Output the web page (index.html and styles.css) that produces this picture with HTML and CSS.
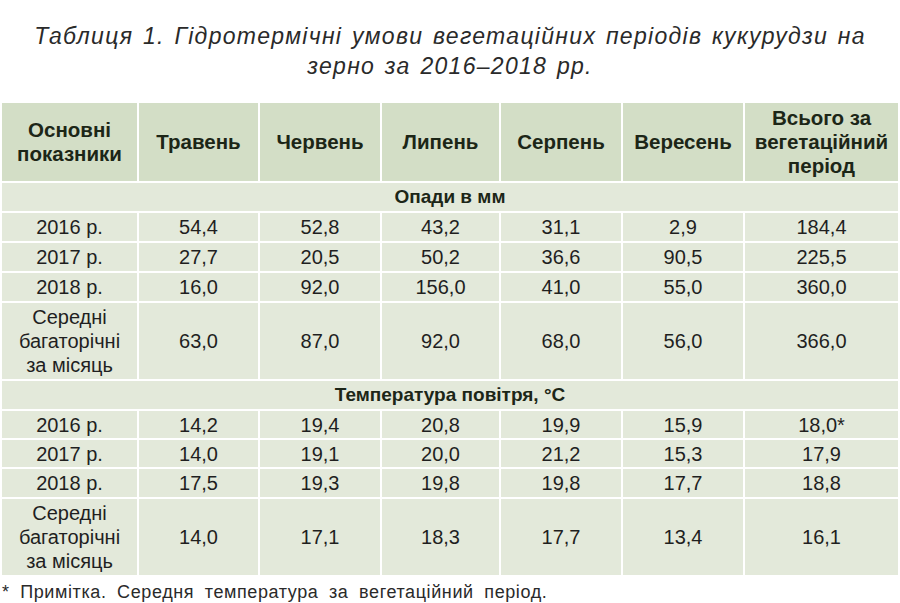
FILE: index.html
```html
<!DOCTYPE html>
<html lang="uk">
<head>
<meta charset="utf-8">
<title>Таблиця 1</title>
<link rel="stylesheet" href="styles.css">
</head>
<body>
<h1 class="title">Таблиця 1. Гідротермічні умови вегетаційних періодів кукурудзи на<br>зерно за 2016–2018 рр.</h1>
<table class="data">
  <colgroup>
    <col class="c1"><col class="c2"><col class="c3"><col class="c4"><col class="c5"><col class="c6"><col class="c7">
  </colgroup>
  <thead>
    <tr class="head">
      <th>Основні<br>показники</th>
      <th>Травень</th>
      <th>Червень</th>
      <th>Липень</th>
      <th>Серпень</th>
      <th>Вересень</th>
      <th>Всього за<br>вегетаційний<br>період</th>
    </tr>
  </thead>
  <tbody>
    <tr class="sub"><td colspan="7">Опади в мм</td></tr>
    <tr class="row"><td>2016 р.</td><td>54,4</td><td>52,8</td><td>43,2</td><td>31,1</td><td>2,9</td><td>184,4</td></tr>
    <tr class="row"><td>2017 р.</td><td>27,7</td><td>20,5</td><td>50,2</td><td>36,6</td><td>90,5</td><td>225,5</td></tr>
    <tr class="row"><td>2018 р.</td><td>16,0</td><td>92,0</td><td>156,0</td><td>41,0</td><td>55,0</td><td>360,0</td></tr>
    <tr class="avg"><td>Середні<br>багаторічні<br>за місяць</td><td>63,0</td><td>87,0</td><td>92,0</td><td>68,0</td><td>56,0</td><td>366,0</td></tr>
    <tr class="sub"><td colspan="7">Температура повітря, °С</td></tr>
    <tr class="row short"><td>2016 р.</td><td>14,2</td><td>19,4</td><td>20,8</td><td>19,9</td><td>15,9</td><td>18,0*</td></tr>
    <tr class="row short"><td>2017 р.</td><td>14,0</td><td>19,1</td><td>20,0</td><td>21,2</td><td>15,3</td><td>17,9</td></tr>
    <tr class="row"><td>2018 р.</td><td>17,5</td><td>19,3</td><td>19,8</td><td>19,8</td><td>17,7</td><td>18,8</td></tr>
    <tr class="avg"><td>Середні<br>багаторічні<br>за місяць</td><td>14,0</td><td>17,1</td><td>18,3</td><td>17,7</td><td>13,4</td><td>16,1</td></tr>
  </tbody>
</table>
<p class="note">* Примітка. Середня температура за вегетаційний період.</p>
</body>
</html>
```

FILE: styles.css
```css
html, body {
  margin: 0;
  padding: 0;
  background: #ffffff;
}
body {
  width: 900px;
  font-family: "Liberation Sans", Arial, sans-serif;
  color: #1f1f1f;
}
.title {
  margin: 0;
  padding-top: 21px;
  height: 80px;
  box-sizing: border-box;
  font-size: 23px;
  line-height: 30px;
  font-weight: normal;
  font-style: italic;
  letter-spacing: 1.3px;
  word-spacing: 2px;
  text-align: center;
  color: #2a2a2a;
}
.data {
  margin-top: 21px;
  width: 900px;
  border-collapse: separate;
  border-spacing: 2px;
  table-layout: fixed;
}
.c1 { width: 135px; }
.c2 { width: 119px; }
.c3 { width: 120px; }
.c4 { width: 117px; }
.c5 { width: 120px; }
.c6 { width: 120px; }
.c7 { width: 153px; }
.data th, .data td {
  padding: 0;
  text-align: center;
  vertical-align: middle;
}
.head th {
  height: 78px;
  background: #d3dec6;
  font-size: 20.5px;
  line-height: 24px;
  font-weight: bold;
  color: #1c2617;
}
.sub td {
  height: 28px;
  background: #e3e9da;
  font-size: 19px;
  font-weight: bold;
  color: #1c2617;
}
.row td {
  height: 28px;
  background: #e3e9da;
  font-size: 20px;
  line-height: 24px;
}
.row.short td { height: 27px; }
.avg td {
  height: 76px;
  background: #e3e9da;
  font-size: 20px;
  line-height: 24px;
}
.note {
  margin: 5px 0 0 2px;
  font-size: 18px;
  word-spacing: 5px;
  letter-spacing: 0.6px;
  color: #2a2a2a;
}
```
